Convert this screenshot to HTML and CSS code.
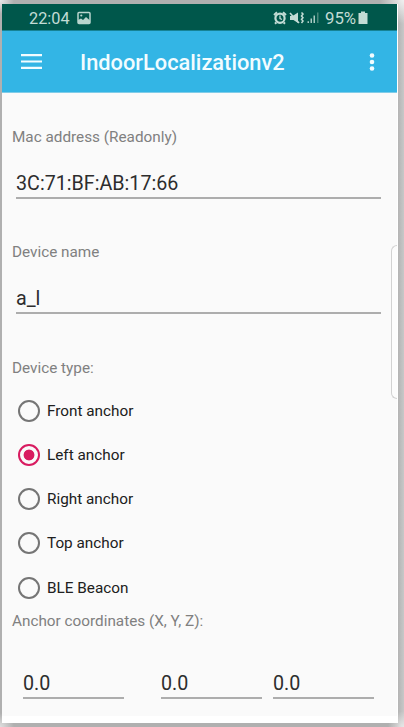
FILE: index.html
```html
<!DOCTYPE html>
<html lang="en">
<head>
<meta charset="utf-8">
<title>IndoorLocalizationv2</title>
<link rel="stylesheet" href="styles.css">
</head>
<body>
<main class="screen">
  <header class="status">
    <span class="clock">22:04</span>
    <svg class="picture" width="14" height="14" viewBox="0 0 14 14"><rect x="1" y="1.500" width="12" height="11" rx="1" fill="none" stroke="#b9d5ce" stroke-width="1.500"/><path d="M1 12V9l3-1.500 2 1.500 3-3 4 3.500V12z" fill="#b9d5ce"/><circle cx="4.300" cy="4.500" r="1.100" fill="#b9d5ce"/></svg>
    <svg class="indicators" width="47" height="14" viewBox="0 0 47 14">
      <g fill="none" stroke="#c3dcd5"><circle cx="7" cy="7.200" r="4.600" stroke-width="2.200"/><path d="M1 4l3-2.700M13 4l-3-2.700M3.300 11.500l-1.300 1.300M10.700 11.500l1.300 1.300" stroke-width="2"/><path d="M7 4.400v3.100l2 1" stroke-width="1.300"/><path d="M17 2l9 10" stroke-width="1.600"/><path d="M28.500 1.500l1.500 1.600-1.500 1.800 1.500 1.800-1.500 1.600 1.500 1.800-1.500 1.800" stroke-width="1.500"/></g>
      <path d="M17 5h2.500L25 1.500v10.500L20.500 9H17z" fill="#c3dcd5"/>
      <path d="M34.500 10.300H36V12h-1.500zM37.500 7.500H39V12h-1.500zM40.500 4.500H42V12h-1.500z" fill="#a9cac2"/><path d="M44 1.500h1.500V12H44z" fill="#4b887b"/>
    </svg>
    <span class="percent">95%</span>
    <svg class="battery" width="10" height="14" viewBox="0 0 10 14"><path d="M3 0.500h4V2h2.500v11H0.500V2H3z" fill="#c3dcd5"/></svg>
  </header>
  <nav class="toolbar">
    <svg class="menu" width="21" height="15" viewBox="0 0 21 15"><path d="M0 1.200h21M0 7.500h21M0 13.800h21" stroke="#f2fcff" stroke-width="2.200"/></svg>
    <h1 class="title">IndoorLocalizationv2</h1>
    <svg class="more" width="6" height="18" viewBox="0 0 6 18"><g fill="#f2fcff"><circle cx="3" cy="2.500" r="2.300"/><circle cx="3" cy="9" r="2.300"/><circle cx="3" cy="15.500" r="2.300"/></g></svg>
  </nav>
  <form class="form">
    <div class="field">
      <div class="label">Mac address (Readonly)</div>
      <div class="input">3C:71:BF:AB:17:66</div>
    </div>
    <div class="field">
      <div class="label">Device name</div>
      <div class="input">a_l</div>
    </div>
    <div class="label">Device type:</div>
    <div class="radios">
      <div class="option"><i class="radio"></i><span>Front anchor</span></div>
      <div class="option"><i class="radio checked"></i><span>Left anchor</span></div>
      <div class="option"><i class="radio"></i><span>Right anchor</span></div>
      <div class="option"><i class="radio"></i><span>Top anchor</span></div>
      <div class="option"><i class="radio"></i><span>BLE Beacon</span></div>
    </div>
    <div class="label coord-label">Anchor coordinates (X, Y, Z):</div>
    <div class="coords">
      <div class="input">0.0</div>
      <div class="input">0.0</div>
      <div class="input">0.0</div>
    </div>
  </form>
  <div class="edge-handle"></div>
</main>
</body>
</html>
```
FILE: styles.css
```css
* { box-sizing: border-box; }
body {
  margin: 0;
  width: 404px;
  height: 727px;
  padding: 4px 6px 4px 2px;
  overflow: hidden;
  background:
    radial-gradient(circle at 0 0, #e8e8e8, transparent 14px),
    radial-gradient(circle at 404px 0, #f0f0f0, transparent 24px),
    radial-gradient(circle at 0 727px, #e0e0e0, transparent 14px),
    radial-gradient(circle at 404px 727px, #e8e8e8, transparent 16px),
    linear-gradient(90deg, #b0b0b0 0, #b0b0b0 398px, #b4b4b4 398px, #c8c8c8 404px);
  font-family: Roboto, sans-serif;
}
.screen {
  position: relative;
  width: 396px;
  height: 719px;
  background: #fafafa;
  border-right: 1px solid #fff;
  border-bottom: 7px solid #fff;
}
.status {
  display: flex;
  align-items: center;
  height: 27px;
  padding: 1px 0 0 27px;
  background: #00574b;
  border-bottom: 1px solid #168395;
  color: #c3dcd5;
  font-size: 16.300px;
}
.status svg { flex: none; }
.clock { width: 48px; padding-top: 1px; }
.indicators { margin-left: 182px; }
.percent { width: 34px; margin-left: 5px; padding-top: 1px; font-size: 16.800px; }
.battery { margin-left: -1px; }
.toolbar {
  display: flex;
  align-items: center;
  height: 62px;
  padding-left: 19px;
  background: #33b5e5;
  border-bottom: 1px solid #80cce8;
}
.title {
  width: 289px;
  margin: 2px 0 0 38px;
  color: #f2fcff;
  font-size: 21.800px;
  font-weight: 500;
  line-height: 30px;
}
.form { padding: 34px 15px 0 10px; }
.field { height: 115.400px; }
.label {
  height: 20px;
  color: #808080;
  font-size: 15.300px;
  line-height: 20px;
  white-space: nowrap;
}
.input {
  height: 30px;
  border-bottom: 2px solid #adadad;
  color: #2d2d2d;
  font-size: 19.700px;
  line-height: 26px;
}
.field .input { width: 365px; margin: 21px 0 0 4px; height: 31px; padding-top: 3px; }
.radios { padding-top: 11px; }
.option {
  display: flex;
  align-items: center;
  height: 44.200px;
  padding-left: 6px;
  color: #202020;
  font-size: 15.300px;
}
.radio {
  display: block;
  width: 22px;
  height: 22px;
  margin-right: 7px;
  border: 2px solid #757575;
  border-radius: 50%;
}
.radio.checked {
  border-color: #d81b60;
  background: radial-gradient(circle, #d81b60 0 5px, transparent 5.800px);
}
.coord-label { margin-top: 1px; }
.coords { display: flex; padding: 38px 0 0 11px; }
.coords .input { flex: none; width: 101px; line-height: 29px; }
.coords .input:nth-child(2) { margin-left: 37px; }
.coords .input:nth-child(3) { margin-left: 11px; }
.edge-handle {
  position: absolute;
  top: 241px;
  right: 0;
  width: 6px;
  height: 154px;
  border: 1px solid #d2d2d2;
  border-right: 0;
  border-radius: 6px 0 0 6px;
  background: #fcfcfc;
}
```
